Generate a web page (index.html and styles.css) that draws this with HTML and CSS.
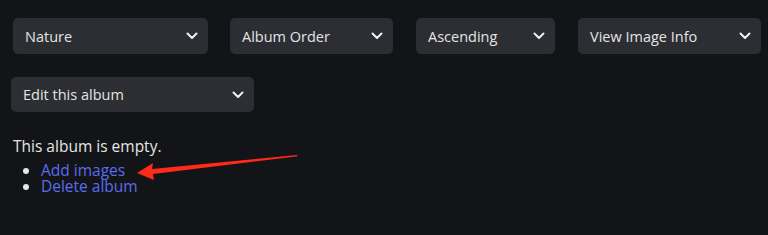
FILE: index.html
```html
<!DOCTYPE html>
<html lang="en">
<head>
  <meta charset="UTF-8" />
  <meta name="viewport" content="width=device-width, initial-scale=1" />
  <title>Album</title>
  <link rel="stylesheet" href="styles.css">
</head>
<body>
  <div class="toolbar">
    <div class="dropdown w-nature"><span>Nature</span><svg class="chev" viewBox="0 0 12 8"><path d="M1.5 1.5 6 6 10.5 1.5"/></svg></div>
    <div class="dropdown w-order"><span>Album Order</span><svg class="chev" viewBox="0 0 12 8"><path d="M1.5 1.5 6 6 10.5 1.5"/></svg></div>
    <div class="dropdown w-asc"><span>Ascending</span><svg class="chev" viewBox="0 0 12 8"><path d="M1.5 1.5 6 6 10.5 1.5"/></svg></div>
    <div class="dropdown w-info"><span>View Image Info</span><svg class="chev" viewBox="0 0 12 8"><path d="M1.5 1.5 6 6 10.5 1.5"/></svg></div>
  </div>

  <div class="toolbar second">
    <div class="dropdown w-edit"><span>Edit this album</span><svg class="chev" viewBox="0 0 12 8"><path d="M1.5 1.5 6 6 10.5 1.5"/></svg></div>
  </div>

  <div class="content">
    <p class="empty">This album is empty.</p>
    <ul class="actions">
      <li><a href="#">Add images</a></li>
      <li><a href="#">Delete album</a></li>
    </ul>
  </div>

  <!-- annotation arrow -->
  <svg class="arrow" width="170" height="30" viewBox="0 0 170 30">
    <path d="M2 19 L18 9 L17 15 L162 1 L162.6 2.2 L18 20 L19 26 Z"/>
  </svg>
</body>
</html>
```

FILE: styles.css
```css
body {
  margin: 0;
  background: #131418;
  color: #e6e6e6;
  font-family: "Open Sans", sans-serif;
  position: relative;
  height: 235px;
  overflow: hidden;
}
.toolbar {
  display: flex;
  gap: 22px;
  padding: 18px 0 0 13px;
}
.toolbar.second {
  padding: 23px 0 0 11px;
}
.dropdown {
  height: 36px;
  background: #2c2e33;
  border-radius: 5px;
  display: flex;
  align-items: center;
  justify-content: space-between;
  padding: 0 10px 0 12px;
  box-sizing: border-box;
  font-size: 14.5px;
  color: #e4e4e4;
}
.chev {
  width: 12px;
  height: 8px;
  fill: none;
  stroke: #f0f0f0;
  stroke-width: 2;
  stroke-linecap: round;
  stroke-linejoin: round;
}
.w-nature { width: 195px; }
.w-order { width: 163px; }
.w-asc { width: 139px; margin-left: 1px; }
.w-info { width: 183px; margin-left: 1px; }
.w-edit { width: 243px; height: 35px; }
.content {
  padding: 23px 0 0 13px;
  font-size: 15.5px;
}
.empty {
  margin: 0;
  line-height: 22px;
}
.actions {
  margin: 5px 0 0;
  padding-left: 28px;
  line-height: 16px;
}
.actions a {
  color: #5a6cf0;
  text-decoration: none;
}
.arrow {
  position: absolute;
  left: 135px;
  top: 154px;
  fill: #ff2a1a;
}
```
